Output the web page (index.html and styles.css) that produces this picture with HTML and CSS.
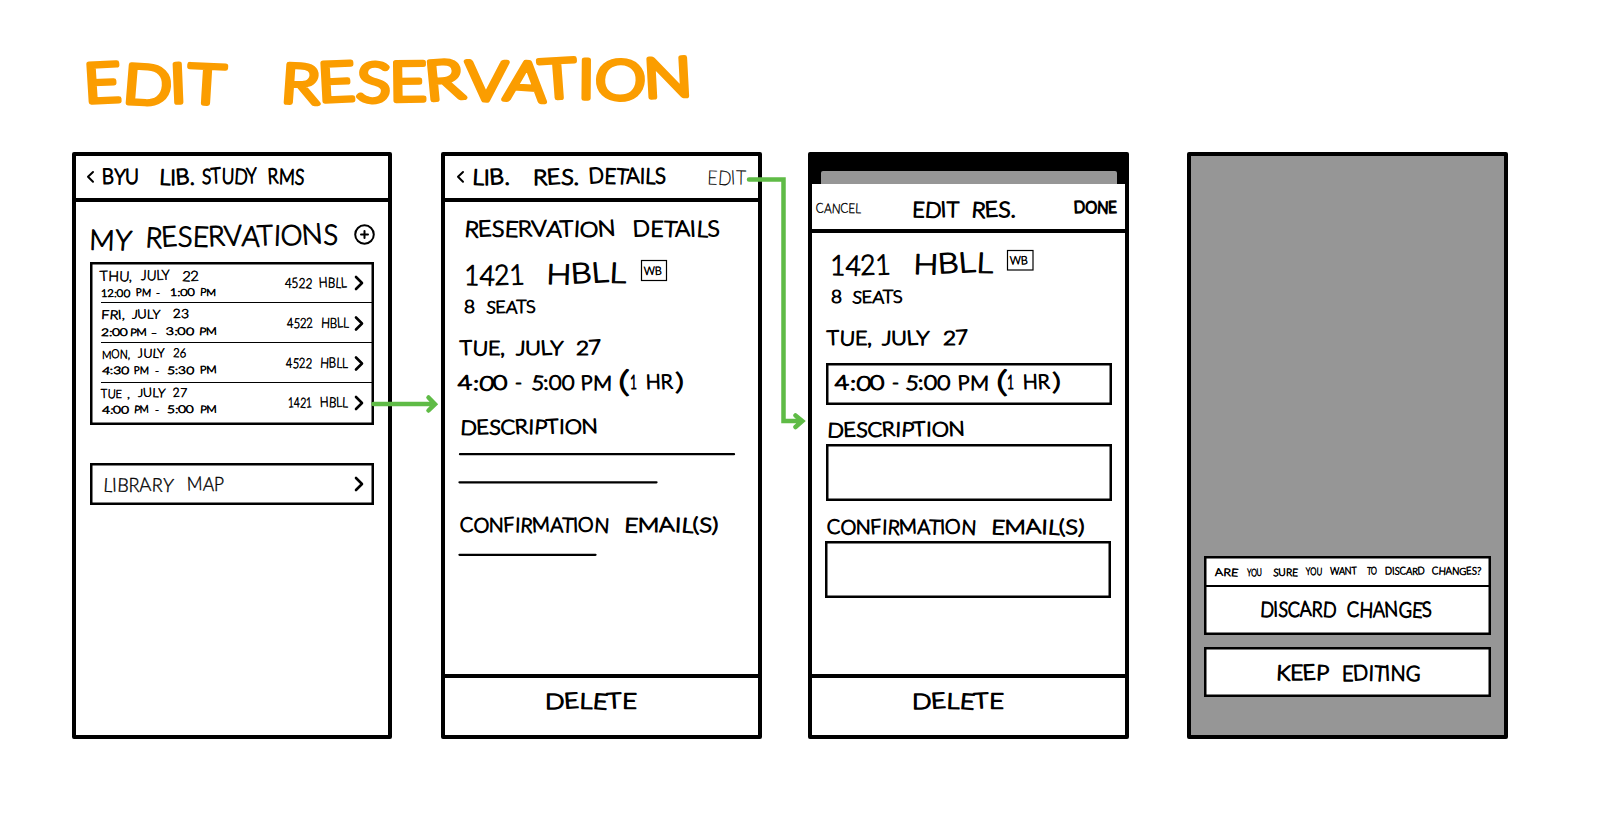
FILE: index.html
```html
<!DOCTYPE html>
<html lang="en">
<head>
<meta charset="utf-8">
<title>Edit Reservation</title>
<link rel="stylesheet" href="styles.css">
<script src="labels.js" defer></script>
</head>
<body>
<main class="sheet">
  <svg class="ink title" viewBox="0 0 1608 152" width="1608" height="152">
    <text x="85" y="102.500" data-w="139">EDIT</text>
    <text x="280" y="102" data-w="413" transform="rotate(-0.700 280 102)">RESERVATION</text>
  </svg>

  <div class="board">
    <section class="screen list-screen">
      <header class="bar">
        <svg class="ink head" viewBox="76 156 312 42" width="312" height="42">
          <path class="back" d="M93 172l-5 4.800 5 5"/>
          <text x="102" y="184" data-w="37">BYU</text><text x="159" y="184.500" data-w="36">LIB.</text><text x="202" y="183.500" data-w="55">STUDY</text><text x="268" y="184" data-w="36">RMS</text>
        </svg>
      </header>
      <svg class="ink h1" viewBox="76 202 312 60" width="312" height="60">
        <text x="89" y="249.500" data-w="42">MY</text><text x="145" y="247" data-w="193" transform="rotate(-0.8 147 247)">RESERVATIONS</text>
        <circle class="plus" cx="364.500" cy="234.500" r="9.300"/><path class="plus" d="M361 234.500h7M364.500 231v7"/>
      </svg>
      <div class="box reservations">
        <svg class="ink row" viewBox="101 264 271 38" width="271" height="38">
          <g class="day"><text x="100" y="281" data-w="32">THU,</text><text x="141" y="280" data-w="29">JULY</text><text x="182" y="281" data-w="17">22</text></g>
          <g class="time"><text x="101" y="297" data-w="29">12:00</text><text x="136" y="296" data-w="15">PM</text><text x="156" y="296" data-w="4">-</text><text x="170" y="296" data-w="25">1:00</text><text x="200" y="295.500" data-w="16">PM</text></g>
          <g class="room"><text x="285" y="288" data-w="27">4522</text><text x="319" y="287.500" data-w="28">HBLL</text></g>
          <path class="chev" d="M356 277l6 6-6 6"/>
        </svg>
        <svg class="ink row" viewBox="101 303 271 39" width="271" height="39">
          <g class="day low"><text x="101" y="319" data-w="24">FRI,</text><text x="132" y="318.500" data-w="28">JULY</text><text x="173" y="318" data-w="16">23</text></g>
          <g class="time"><text x="101" y="336" data-w="27">2:00</text><text x="130" y="336" data-w="17">PM</text><text x="151" y="336" data-w="6">-</text><text x="166" y="335" data-w="28">3:00</text><text x="199" y="335" data-w="18">PM</text></g>
          <g class="room"><text x="287" y="328" data-w="26">4522</text><text x="321" y="327.500" data-w="28">HBLL</text></g>
          <path class="chev" d="M356 317.500l6 6-6 6"/>
        </svg>
        <svg class="ink row" viewBox="101 343 271 39" width="271" height="39">
          <g class="day low"><text x="102" y="358.500" data-w="28">MON,</text><text x="138" y="357.500" data-w="27">JULY</text><text x="173" y="357" data-w="13">26</text></g>
          <g class="time"><text x="102" y="374" data-w="27">4:30</text><text x="134" y="374" data-w="15">PM</text><text x="155" y="374" data-w="4">-</text><text x="167" y="374" data-w="27">5:30</text><text x="200" y="373.500" data-w="17">PM</text></g>
          <g class="room"><text x="286" y="368" data-w="26">4522</text><text x="320" y="367.500" data-w="28">HBLL</text></g>
          <path class="chev" d="M356 357.500l6 6-6 6"/>
        </svg>
        <svg class="ink row last" viewBox="101 383 271 40" width="271" height="40">
          <g class="day low"><text x="101" y="398" data-w="21">TUE</text><text x="127" y="398" data-w="3">,</text><text x="138" y="397" data-w="27">JULY</text><text x="173" y="397" data-w="14">27</text></g>
          <g class="time"><text x="102" y="413.500" data-w="27">4:00</text><text x="134" y="413" data-w="15">PM</text><text x="155" y="413" data-w="4">-</text><text x="167" y="413" data-w="27">5:00</text><text x="200" y="413" data-w="17">PM</text></g>
          <g class="room"><text x="288" y="407.500" data-w="24">1421</text><text x="320" y="407" data-w="28">HBLL</text></g>
          <path class="chev" d="M356 397l6 6-6 6"/>
        </svg>
      </div>
      <div class="box map">
        <svg class="ink" viewBox="92 465 280 38" width="280" height="38">
          <g class="maplabel"><text x="103" y="491.500" data-w="70">LIBRARY</text><text x="187" y="490.500" data-w="37">MAP</text></g>
          <path class="chev" d="M356 478l6 6-6 6"/>
        </svg>
      </div>
    </section>

    <section class="screen details-screen">
      <header class="bar">
        <svg class="ink head" viewBox="445 156 313 42" width="313" height="42">
          <path class="back" d="M463 172l-5 4.800 5 5"/>
          <text x="472" y="184.500" data-w="38">LIB.</text><text x="533" y="184.500" data-w="46">RES.</text><text x="589" y="183.500" data-w="77">DETAILS</text>
          <g class="thin"><text x="707" y="184.500" data-w="39">EDIT</text></g>
        </svg>
      </header>
      <div class="fields">
        <svg class="ink h2" viewBox="445 202 313 50" width="313" height="50">
          <text x="464" y="236.500" data-w="152">RESERVATION</text><text x="633" y="236.500" data-w="87">DETAILS</text>
        </svg>
        <svg class="ink h1" viewBox="445 252 313 40" width="313" height="40">
          <text x="464" y="285" data-w="61">1421</text><text x="546" y="284" data-w="80" transform="rotate(-1.500 548 284)">HBLL</text>
          <rect class="tag" x="641.500" y="260.500" width="25" height="20"/>
          <g class="wb"><text x="644" y="275" data-w="18">WB</text></g>
        </svg>
        <svg class="ink seats" viewBox="445 292 313 38" width="313" height="38">
          <text x="464" y="313" data-w="11">8</text><text x="486" y="313" data-w="50">SEATS</text>
        </svg>
        <svg class="ink body" viewBox="445 330 313 35" width="313" height="35">
          <text x="460" y="355" data-w="45">TUE,</text><text x="516" y="355" data-w="47">JULY</text><text x="576" y="354.500" data-w="26">27</text>
        </svg>
        <svg class="ink body" viewBox="445 365 313 40" width="313" height="40">
          <text x="458" y="390" data-w="50">4:00</text><text x="515" y="389" data-w="7">-</text><text x="531" y="389.500" data-w="43">5:00</text><text x="581" y="390" data-w="31">PM</text><text class="paren" x="618" y="392" data-w="12">(</text><text x="630" y="388.500" data-w="7">1</text><text x="646" y="389" data-w="27">HR</text><text class="paren close" x="675" y="390" data-w="9">)</text>
        </svg>
        <svg class="ink body" viewBox="445 405 313 38" width="313" height="38">
          <text x="460" y="434.500" data-w="138" transform="rotate(-0.500 462 434)">DESCRIPTION</text>
        </svg>
        <svg class="ink rule" viewBox="445 443 313 62" width="313" height="62">
          <path d="M460 454.200h274M459.500 482.300h197"/>
        </svg>
        <svg class="ink body" viewBox="445 505 313 38" width="313" height="38">
          <text x="460" y="532" data-w="149">CONFIRMATION</text><text x="624" y="532" data-w="94">EMAIL(S)</text>
        </svg>
        <svg class="ink rule" viewBox="445 543 313 24" width="313" height="24"><path d="M459.500 554.800h136"/></svg>
      </div>
      <footer class="delete">
        <svg class="ink head" viewBox="445 678 313 57" width="313" height="57"><text x="545" y="708.500" data-w="92">DELETE</text></svg>
      </footer>
    </section>

    <section class="screen edit-screen">
      <div class="backdrop"><div class="sheet-edge"></div></div>
      <header class="bar edit-bar">
        <svg class="ink head" viewBox="812 184 313 45" width="313" height="45">
          <g class="cancel"><text x="816" y="213" data-w="45">CANCEL</text></g>
          <text x="912" y="217" data-w="47">EDIT</text><text x="971" y="217" data-w="45">RES.</text>
          <g class="done"><text x="1074" y="213" data-w="43">DONE</text></g>
        </svg>
      </header>
      <div class="fields">
        <svg class="ink h1" viewBox="812 233 313 49" width="313" height="49">
          <text x="830" y="275" data-w="61">1421</text><text x="913" y="274" data-w="80" transform="rotate(-1.500 915 274)">HBLL</text>
          <rect class="tag" x="1007.500" y="250.500" width="25.500" height="19.500"/>
          <g class="wb"><text x="1010" y="264.500" data-w="18">WB</text></g>
        </svg>
        <svg class="ink seats" viewBox="812 282 313 38" width="313" height="38">
          <text x="831" y="303" data-w="11">8</text><text x="852" y="303" data-w="51">SEATS</text>
        </svg>
        <svg class="ink body" viewBox="812 320 313 43" width="313" height="43">
          <text x="827" y="345" data-w="45">TUE,</text><text x="882" y="345" data-w="47">JULY</text><text x="943" y="344.500" data-w="26">27</text>
        </svg>
        <div class="box time-box">
          <svg class="ink body" viewBox="828 365 282 38" width="282" height="38">
            <text x="835" y="390" data-w="50">4:00</text><text x="892" y="389" data-w="7">-</text><text x="905" y="389.500" data-w="45">5:00</text><text x="958" y="390" data-w="31">PM</text><text class="paren" x="996" y="392" data-w="12">(</text><text x="1007" y="388.500" data-w="7">1</text><text x="1023" y="389" data-w="27">HR</text><text class="paren close" x="1052" y="390" data-w="9">)</text>
          </svg>
        </div>
        <svg class="ink body" viewBox="812 405 313 39" width="313" height="39">
          <text x="827" y="437" data-w="138" transform="rotate(-0.500 829 437)">DESCRIPTION</text>
        </svg>
        <div class="box text-box"></div>
        <svg class="ink body" viewBox="812 501 313 40" width="313" height="40">
          <text x="827" y="534" data-w="149">CONFIRMATION</text><text x="991" y="534" data-w="93">EMAIL(S)</text>
        </svg>
        <div class="box text-box email-box"></div>
      </div>
      <footer class="delete">
        <svg class="ink head" viewBox="812 678 313 57" width="313" height="57"><text x="912" y="708.500" data-w="92">DELETE</text></svg>
      </footer>
    </section>

    <section class="screen confirm-screen">
      <div class="box prompt">
        <svg class="ink ask" viewBox="1206 558 283 27" width="283" height="27">
          <text x="1215" y="576" data-w="23">ARE</text><text x="1247" y="576" data-w="15">YOU</text><text x="1273" y="576" data-w="25">SURE</text><text x="1306" y="575" data-w="16">YOU</text><text x="1330" y="574.500" data-w="27">WANT</text><text x="1367" y="574.500" data-w="10">TO</text><text x="1385" y="574.500" data-w="40">DISCARD</text><text x="1432" y="574.500" data-w="49">CHANGES?</text>
        </svg>
        <svg class="ink action" viewBox="1206 587 283 46" width="283" height="46">
          <text x="1260" y="616.500" data-w="76">DISCARD</text><text x="1347" y="617" data-w="85">CHANGES</text>
        </svg>
      </div>
      <div class="box keep">
        <svg class="ink action" viewBox="1206 649 283 46" width="283" height="46">
          <text x="1276" y="680" data-w="53">KEEP</text><text x="1342" y="680.500" data-w="78">EDITING</text>
        </svg>
      </div>
    </section>
  </div>

  <svg class="arrows" viewBox="0 0 1608 836" width="1608" height="836">
    <path d="M373.500 404H434M428.500 397.500L435 404.200L428.500 410.500"/>
    <path d="M749 179.500H783.500V421H801M795.500 415.500L802.300 421L795.500 427"/>
  </svg>
</main>
</body>
</html>
```
FILE: labels.js
```js
// Fit each word of the lettering to its drawn width and tilt its letters
// slightly, in a fixed pattern, for a hand-drawn look.
var tilt = [-3, 4, -2, 3, 0, -4, 2, 5, -3, 1, 3, -2];
document.querySelectorAll('text[data-w]').forEach(function (word, n) {
  word.setAttribute('textLength', word.dataset.w);
  word.setAttribute('lengthAdjust', 'spacingAndGlyphs');
  var length = word.textContent.length;
  if (length < 2) return;
  var angles = [];
  for (var i = 0; i < length; i++) angles.push(tilt[(n + i) % tilt.length]);
  word.setAttribute('rotate', angles.join(' '));
});
```
FILE: styles.css
```css
* { box-sizing: border-box; }
body { margin: 0; background: #fff; overflow: hidden; }
.sheet { position: relative; width: 1608px; height: 836px; }
svg { display: block; overflow: visible; }

/* Marker lettering: a light face with a round stroke over it */
.ink {
  font-family: Lato, "Open Sans", sans-serif;
  font-weight: 300;
  fill: #000;
  stroke: #000;
  stroke-width: 0.6px;
  stroke-linecap: round;
  stroke-linejoin: round;
}
.ink path, .ink circle, .ink rect { fill: none; }
.title { font-size: 54px; fill: #fb9d00; stroke: #fb9d00; stroke-width: 5px; }
.head { font-size: 21.5px; stroke-width: 1.3px; }
.h1 { font-size: 28px; stroke-width: 1.1px; }
.h2 { font-size: 22px; stroke-width: 1.200px; }
.seats { font-size: 17px; stroke-width: 1px; }
.body { font-size: 20px; stroke-width: 1.200px; }
.action { font-size: 21px; stroke-width: 1.300px; }
.ask { font-size: 10.500px; stroke-width: 0.7px; }
.day { font-size: 14px; stroke-width: 0.6px; }
.day.low { font-size: 12.500px; }
.time { font-size: 10.500px; stroke-width: 0.7px; }
.room { font-size: 14px; stroke-width: 0.6px; }
.maplabel { font-size: 19px; stroke-width: 0.4px; }
.thin { font-size: 20px; stroke-width: 0.1px; }
.cancel { font-size: 13.500px; stroke-width: 0.4px; }
.done { font-size: 16.500px; stroke-width: 1.7px; }
.wb { font-size: 11.500px; stroke-width: 0.6px; }
.paren { font-size: 29px; stroke-width: 1px; }
.paren.close { font-size: 24px; }

.ink .back { stroke-width: 2px; }
.ink .chev { stroke-width: 2.600px; }
.ink .plus { stroke-width: 2px; }
.ink .tag { stroke-width: 1.200px; stroke-linejoin: miter; }
.rule { stroke-width: 2.300px; }

/* Phone frames */
.board { display: flex; padding-left: 72px; }
.screen {
  display: flex;
  flex-direction: column;
  width: 321px;
  height: 587px;
  border: 4px solid #000;
  border-radius: 2px;
  background: #fff;
}
.list-screen { width: 320px; }
.details-screen { margin-left: 49px; }
.edit-screen { margin-left: 46px; }
.confirm-screen { margin-left: 58px; background: #969696; }
.bar { flex: none; height: 46px; border-bottom: 4px solid #000; }
.box { border: 2px solid #000; background: #fff; box-shadow: inset 0 0 0 0.5px #000; }

.reservations { width: 284px; margin-left: 14px; padding-left: 9px; }
.row { border-bottom: 1px solid #000; box-sizing: content-box; }
.row.last { border-bottom: 0; }
.map { width: 284px; height: 42px; margin: 38px 0 0 14px; }

.fields { flex: 1; }
.delete { flex: none; height: 61px; border-top: 4px solid #000; }

.backdrop { flex: none; height: 28px; padding: 15px 8px 0 9px; background: #000; }
.sheet-edge { height: 13px; border-radius: 2px 2px 0 0; background: #969696; }
.edit-bar { height: 49px; }
.time-box { width: 286px; height: 42px; margin-left: 14px; }
.text-box { width: 286px; height: 57px; margin-left: 14px; }
.email-box { margin-left: 13px; }

.prompt { width: 287px; margin: 400px 0 0 13px; }
.ask { border-bottom: 2px solid #000; box-sizing: content-box; }
.keep { width: 287px; height: 50px; margin: 12px 0 0 13px; }

/* Flow arrows between the frames */
.arrows {
  position: absolute;
  inset: 0;
  fill: none;
  stroke: #5fbb46;
  stroke-width: 4.500px;
  stroke-linecap: round;
  stroke-linejoin: miter;
}
```
